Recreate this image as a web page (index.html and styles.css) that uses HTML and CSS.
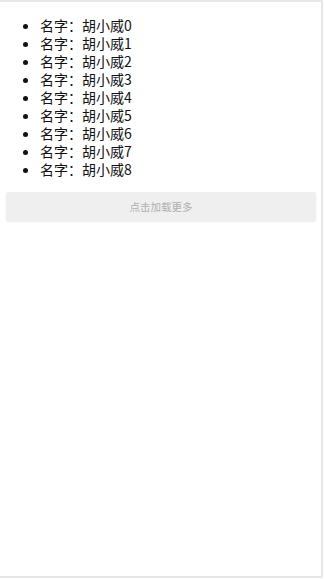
FILE: index.html
```html
<!DOCTYPE html>
<html lang="zh">
<head>
<meta charset="utf-8">
<title>列表</title>
<link rel="stylesheet" href="styles.css">
</head>
<body>
<div class="frame">
  <ul class="list">
    <li>名字：胡小威0</li>
    <li>名字：胡小威1</li>
    <li>名字：胡小威2</li>
    <li>名字：胡小威3</li>
    <li>名字：胡小威4</li>
    <li>名字：胡小威5</li>
    <li>名字：胡小威6</li>
    <li>名字：胡小威7</li>
    <li>名字：胡小威8</li>
  </ul>
  <div class="more">点击加载更多</div>
</div>
</body>
</html>
```

FILE: styles.css
```css
html, body {
  margin: 0;
  padding: 0;
  background: #fff;
}
body {
  font-family: "Noto Sans CJK SC", "Noto Sans", sans-serif;
  color: #111;
}
.frame {
  box-sizing: border-box;
  width: 323px;
  height: 578px;
  border-top: 2px solid #e8e8e8;
  border-right: 2px solid #e6e6e6;
  border-bottom: 2px solid #e6e6e6;
  overflow: hidden;
}
.list {
  margin: 14px 0 14px 0;
  padding-left: 40px;
  font-size: 14px;
  line-height: 18px;
}
.list li {
  height: 18px;
}
.more {
  box-sizing: border-box;
  margin: 0 5px 0 6px;
  height: 29px;
  background: #efefef;
  border-radius: 2px;
  box-shadow: 0 1px 2px rgba(0, 0, 0, 0.08);
  color: #b0b0b0;
  font-size: 10.5px;
  line-height: 29px;
  text-align: center;
}
```
